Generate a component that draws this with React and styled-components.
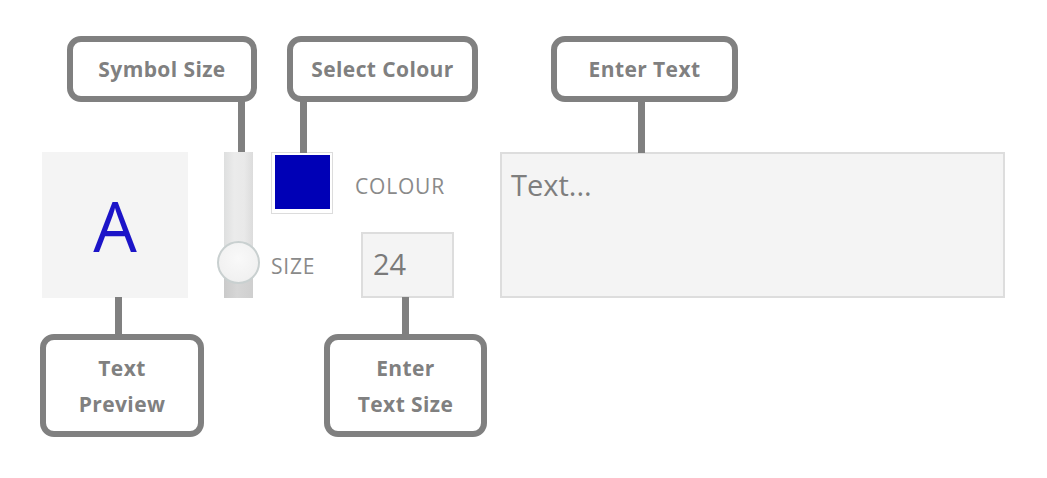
import React from "react";
import styled, { createGlobalStyle } from "styled-components";

const Global = createGlobalStyle`
  html, body { margin: 0; padding: 0; background: #ffffff; }
  body { font-family: "Open Sans", "Liberation Sans", sans-serif; }
`;

const Stage = styled.div`
  position: relative;
  width: 1047px;
  height: 478px;
  box-sizing: border-box;
  padding: 152px 0 0 42px;
  background: #ffffff;
`;

const ToolRow = styled.div`
  display: flex;
  align-items: stretch;
  height: 146px;
`;

const Preview = styled.div`
  width: 146px;
  background: #f4f4f4;
  display: flex;
  align-items: center;
  justify-content: center;
  font-family: "Open Sans", sans-serif;
  font-size: 69px;
  line-height: 1;
  color: ${(p) => p.$color};
`;

const SliderTrack = styled.div`
  position: relative;
  width: 29px;
  margin-left: 36px;
  background: linear-gradient(90deg, #dedfdf 0%, #ebebeb 35%, #e9e9e9 70%, #dcdcdc 100%);
`;

const SliderFill = styled.div`
  position: absolute;
  left: 0;
  right: 0;
  bottom: 0;
  background: linear-gradient(90deg, #cacaca 0%, #d6d6d6 45%, #cfcfcf 100%);
`;

const SliderThumb = styled.div`
  position: absolute;
  left: 50%;
  width: 43px;
  height: 43px;
  margin-left: -22px;
  margin-top: -21px;
  border-radius: 50%;
  box-sizing: border-box;
  border: 2px solid #c9d0d0;
  background: radial-gradient(circle at 50% 40%, #f9f9f9 0%, #f1f1f1 70%, #e8e8e8 100%);
`;

const Controls = styled.div`
  display: flex;
  flex-direction: column;
  justify-content: space-between;
  margin-left: 18px;
  width: 183px;
`;

const ControlLine = styled.div`
  display: flex;
  align-items: center;
  justify-content: ${(p) => p.$justify || "flex-start"};
  gap: ${(p) => p.$gap || 0}px;
`;

const Swatch = styled.div`
  width: 62px;
  height: 62px;
  box-sizing: border-box;
  border: 1px solid #dcdcdc;
  padding: 2px 2px 4px 3px;
  background: #ffffff;
  &::after {
    content: "";
    display: block;
    width: 100%;
    height: 100%;
    background: ${(p) => p.$color};
  }
`;

const FieldLabel = styled.span`
  font-family: "Open Sans", sans-serif;
  font-size: 21px;
  color: #8a8a8a;
  letter-spacing: 0.8px;
  margin-top: ${(p) => p.$dy || 0}px;
`;

const SizeInput = styled.div`
  width: 93px;
  height: 66px;
  box-sizing: border-box;
  border: 2px solid #dddddd;
  background: #f4f4f4;
  padding: 9px 0 0 10px;
  font-family: "Open Sans", sans-serif;
  font-size: 29px;
  line-height: 42px;
  color: #7a7a7a;
`;

const TextBox = styled.div`
  width: 505px;
  margin-left: 46px;
  box-sizing: border-box;
  border: 2px solid #dddddd;
  background: #f4f4f4;
  padding: 11px 0 0 9px;
  font-family: "Open Sans", sans-serif;
  font-size: 29px;
  line-height: 40px;
  color: #7e7e7e;
`;

const Callout = styled.div`
  position: absolute;
  left: ${(p) => p.$x}px;
  top: ${(p) => p.$y}px;
  width: ${(p) => p.$w}px;
  height: ${(p) => p.$h}px;
  box-sizing: border-box;
  border: 6px solid #808080;
  border-radius: 14px;
  background: #ffffff;
  display: flex;
  align-items: center;
  justify-content: center;
  text-align: center;
  font-family: "Open Sans", "Liberation Sans", sans-serif;
  font-weight: 700;
  font-size: 21px;
  letter-spacing: 0.4px;
  line-height: 36px;
  color: #808080;
`;

const Connector = styled.div`
  position: absolute;
  left: ${(p) => p.$x - 3}px;
  top: ${(p) => p.$y1}px;
  width: 7px;
  height: ${(p) => p.$y2 - p.$y1}px;
  background: #808080;
`;

const callouts = [
  { label: ["Symbol Size"], x: 67, y: 36, w: 190, h: 66, cx: 241, c1: 100, c2: 152 },
  { label: ["Select Colour"], x: 287, y: 36, w: 191, h: 66, cx: 303, c1: 100, c2: 153 },
  { label: ["Enter Text"], x: 551, y: 36, w: 187, h: 66, cx: 641, c1: 100, c2: 153 },
  { label: ["Text", "Preview"], x: 40, y: 334, w: 164, h: 103, cx: 118, c1: 297, c2: 336 },
  { label: ["Enter", "Text Size"], x: 324, y: 334, w: 163, h: 103, cx: 405, c1: 297, c2: 336 },
];

export default function App() {
  const thumbPos = 75; // percent from top
  return (
    <>
      <Global />
      <Stage>
        <ToolRow>
          <Preview $color="#1c14c8">A</Preview>
          <SliderTrack>
            <SliderFill style={{ top: `${thumbPos}%` }} />
            <SliderThumb style={{ top: `${thumbPos}%` }} />
          </SliderTrack>
          <Controls>
            <ControlLine $gap={22}>
              <Swatch $color="#0000b6" />
              <FieldLabel $dy={6}>COLOUR</FieldLabel>
            </ControlLine>
            <ControlLine $justify="space-between">
              <FieldLabel $dy={2}>SIZE</FieldLabel>
              <SizeInput>24</SizeInput>
            </ControlLine>
          </Controls>
          <TextBox>Text...</TextBox>
        </ToolRow>
        {callouts.map((c) => (
          <React.Fragment key={c.label.join(" ")}>
            <Connector $x={c.cx} $y1={c.c1} $y2={c.c2} />
            <Callout $x={c.x} $y={c.y} $w={c.w} $h={c.h}>
              <div>
                {c.label.map((l) => (
                  <div key={l}>{l}</div>
                ))}
              </div>
            </Callout>
          </React.Fragment>
        ))}
      </Stage>
    </>
  );
}
